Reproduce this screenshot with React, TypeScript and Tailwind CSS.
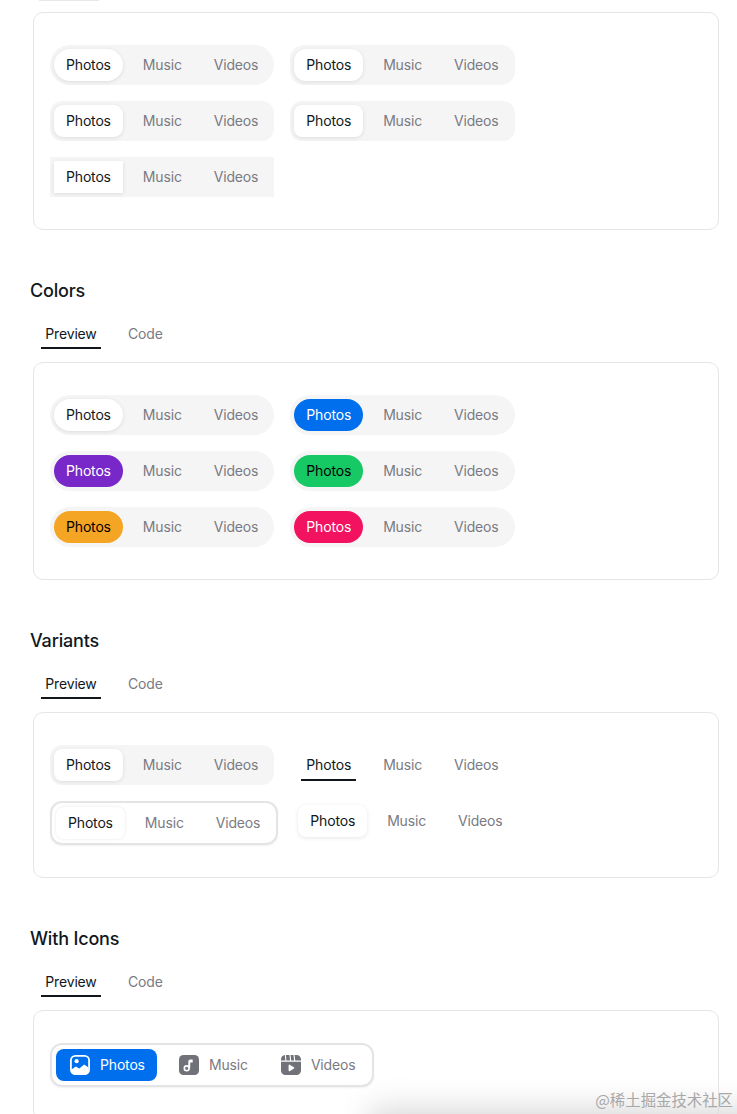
import type { ReactNode } from 'react';

const LABELS = ['Photos', 'Music', 'Videos'];
const INACTIVE = 'text-[#7a7a82]';

type TabsProps = {
  list?: string;
  active?: string;
};

// 一组 Photos / Music / Videos 标签
function Tabs({
  list = 'rounded-[12px] bg-[#f5f5f6]',
  active = 'rounded-[8px] bg-white text-[#11181c] shadow-[0_1px_4px_rgba(0,0,0,0.1)]',
}: TabsProps) {
  return (
    <div className={`flex gap-2 p-1 ${list}`}>
      {LABELS.map((label, i) => (
        <div
          key={label}
          className={`flex h-8 items-center px-3 text-sm tracking-[-0.012em] ${i === 0 ? active : INACTIVE}`}
        >
          {label}
        </div>
      ))}
    </div>
  );
}

function UnderlinedTabs() {
  return (
    <div className="flex gap-2 p-1">
      {LABELS.map((label, i) => (
        <div
          key={label}
          className={`relative flex h-8 items-center px-3 text-sm tracking-[-0.012em] ${i === 0 ? 'text-[#11181c]' : INACTIVE}`}
        >
          {label}
          {i === 0 && <span className="absolute bottom-0 left-[7px] h-0.5 w-[55px] bg-[#11181c]" />}
        </div>
      ))}
    </div>
  );
}

function PhotoIcon() {
  return (
    <svg className="shrink-0" width="20" height="20" viewBox="0 0 20 20" fill="none">
      <rect x="0.9" y="0.9" width="18.2" height="18.2" rx="4.5" stroke="white" strokeWidth="1.8" />
      <circle cx="6.6" cy="6.2" r="2.1" fill="white" />
      <path d="M1.5 14.6l4.2-3 3.6 1.8 4.9-3.8 4.3 2.8v3a3.6 3.6 0 0 1-3.6 3.6H5a3.6 3.6 0 0 1-3.5-4.4z" fill="white" />
    </svg>
  );
}

function MusicIcon() {
  return (
    <svg className="shrink-0" width="20" height="20" viewBox="0 0 20 20">
      <rect width="20" height="20" rx="4.5" fill="#71717a" />
      <circle cx="7.7" cy="13.3" r="2.4" fill="none" stroke="white" strokeWidth="1.6" />
      <path d="M9.3 13.3V6.6c0-1.2.9-2.1 2.1-2.1h2.3v3h-2.5v5.8z" fill="white" />
    </svg>
  );
}

function VideoIcon() {
  return (
    <svg className="shrink-0" width="20" height="20" viewBox="0 0 20 20">
      <path d="M0 5.4V4.5A4.5 4.5 0 0 1 3.8 0.1l.6 5.3zM5.4 5.4 4.9 0h3.6l.5 5.4zM10.1 5.4 9.6 0h2.9l.6 5.4zM14.2 5.4 13.6 0h1.9A4.5 4.5 0 0 1 20 4.5v.9z" fill="#71717a" />
      <path d="M0 6.8h20v8.7a4.5 4.5 0 0 1-4.5 4.5h-11A4.5 4.5 0 0 1 0 15.5z" fill="#71717a" />
      <path d="M7.6 10.4c0-.6.6-1 1.1-.7l4.2 2.6c.5.3.5 1 0 1.3l-4.2 2.6c-.5.3-1.1-.1-1.1-.7z" fill="white" />
    </svg>
  );
}

function IconTabs() {
  return (
    <div className="flex h-11 w-[324px] gap-2.5 rounded-[12px] border-2 border-[#e4e4e7] p-1 shadow-[0_1px_2px_rgba(0,0,0,0.06)]">
      <div className="flex h-8 w-[101px] items-center gap-2.5 rounded-[8px] bg-[#006fee] pl-3.5 text-sm tracking-[-0.012em] text-white">
        <PhotoIcon />
        Photos
      </div>
      <div className={`flex h-8 items-center gap-2.5 px-3 text-sm tracking-[-0.012em] ${INACTIVE}`}>
        <MusicIcon />
        Music
      </div>
      <div className={`flex h-8 items-center gap-2.5 pl-[11px] text-sm tracking-[-0.012em] ${INACTIVE}`}>
        <VideoIcon />
        Videos
      </div>
    </div>
  );
}

function Section({ title, children }: { title: string; children: ReactNode }) {
  return (
    <section className="mt-[46px]">
      <h2 className="pl-[30px] text-[18px] leading-[30px] font-medium tracking-[-0.01em] text-[#11181c]">{title}</h2>
      <div className="mt-[14px] ml-[41px] flex h-[29px] gap-[23px] text-sm tracking-[-0.012em]">
        <div className="h-full w-[60px] border-b-2 border-[#11181c] text-center leading-7 text-[#11181c]">Preview</div>
        <div className={`px-1 leading-7 ${INACTIVE}`}>Code</div>
      </div>
      <Card>{children}</Card>
    </section>
  );
}

function Card({ children, top = 'mt-[13px]' }: { children: ReactNode; top?: string }) {
  return (
    <div className={`ml-[33px] w-[686px] rounded-[10px] border border-[#e5e5e5] px-4 py-8 ${top}`}>
      <div className="flex flex-wrap items-start gap-4">{children}</div>
    </div>
  );
}

const WHITE_ACTIVE = 'bg-white text-[#11181c] shadow-[0_1px_4px_rgba(0,0,0,0.1)]';
const PILL = 'rounded-full bg-[#f5f5f6]';

export default function App() {
  return (
    <div className="relative h-[1114px] overflow-hidden bg-white font-['Inter',sans-serif]">
      <div className="ml-[39px] h-px w-[60px] bg-[#e8e8e8]" />
      <Card top="mt-[11px]">
        <Tabs list={PILL} active={`rounded-full ${WHITE_ACTIVE}`} />
        <Tabs list="rounded-[14px] bg-[#f5f5f6]" active={`rounded-[12px] ${WHITE_ACTIVE}`} />
        <Tabs list="rounded-[12px] bg-[#f5f5f6]" active={`rounded-[9px] ${WHITE_ACTIVE}`} />
        <Tabs />
        <Tabs list="bg-[#f5f5f6]" active={WHITE_ACTIVE} />
      </Card>

      <Section title="Colors">
        <Tabs list={PILL} active={`rounded-full ${WHITE_ACTIVE}`} />
        <Tabs list={PILL} active="rounded-full bg-[#006fee] text-white" />
        <Tabs list={PILL} active="rounded-full bg-[#7828c8] text-white" />
        <Tabs list={PILL} active="rounded-full bg-[#17c964] text-black" />
        <Tabs list={PILL} active="rounded-full bg-[#f5a524] text-black" />
        <Tabs list={PILL} active="rounded-full bg-[#f31260] text-white" />
      </Section>

      <Section title="Variants">
        <Tabs />
        <UnderlinedTabs />
        <Tabs
          list="rounded-[12px] border-2 border-[#e4e4e7] shadow-[0_1px_2px_rgba(0,0,0,0.06)]"
          active="rounded-[8px] bg-white text-[#11181c] shadow-[0_0_3px_rgba(0,0,0,0.1)]"
        />
        <Tabs list="" active={`rounded-[8px] ${WHITE_ACTIVE}`} />
      </Section>

      <Section title="With Icons">
        <IconTabs />
      </Section>

      {/* 底部水印和阴影 */}
      <div className="absolute top-[1110px] right-[-60px] left-[370px] h-10 bg-[#d4d4d4] blur-[16px]" />
      <div className="absolute top-[1089px] right-1 font-['Noto_Sans_CJK_SC',sans-serif] text-[15.4px] leading-5 text-[#a8a8a8]">
        @稀土掘金技术社区
      </div>
    </div>
  );
}
